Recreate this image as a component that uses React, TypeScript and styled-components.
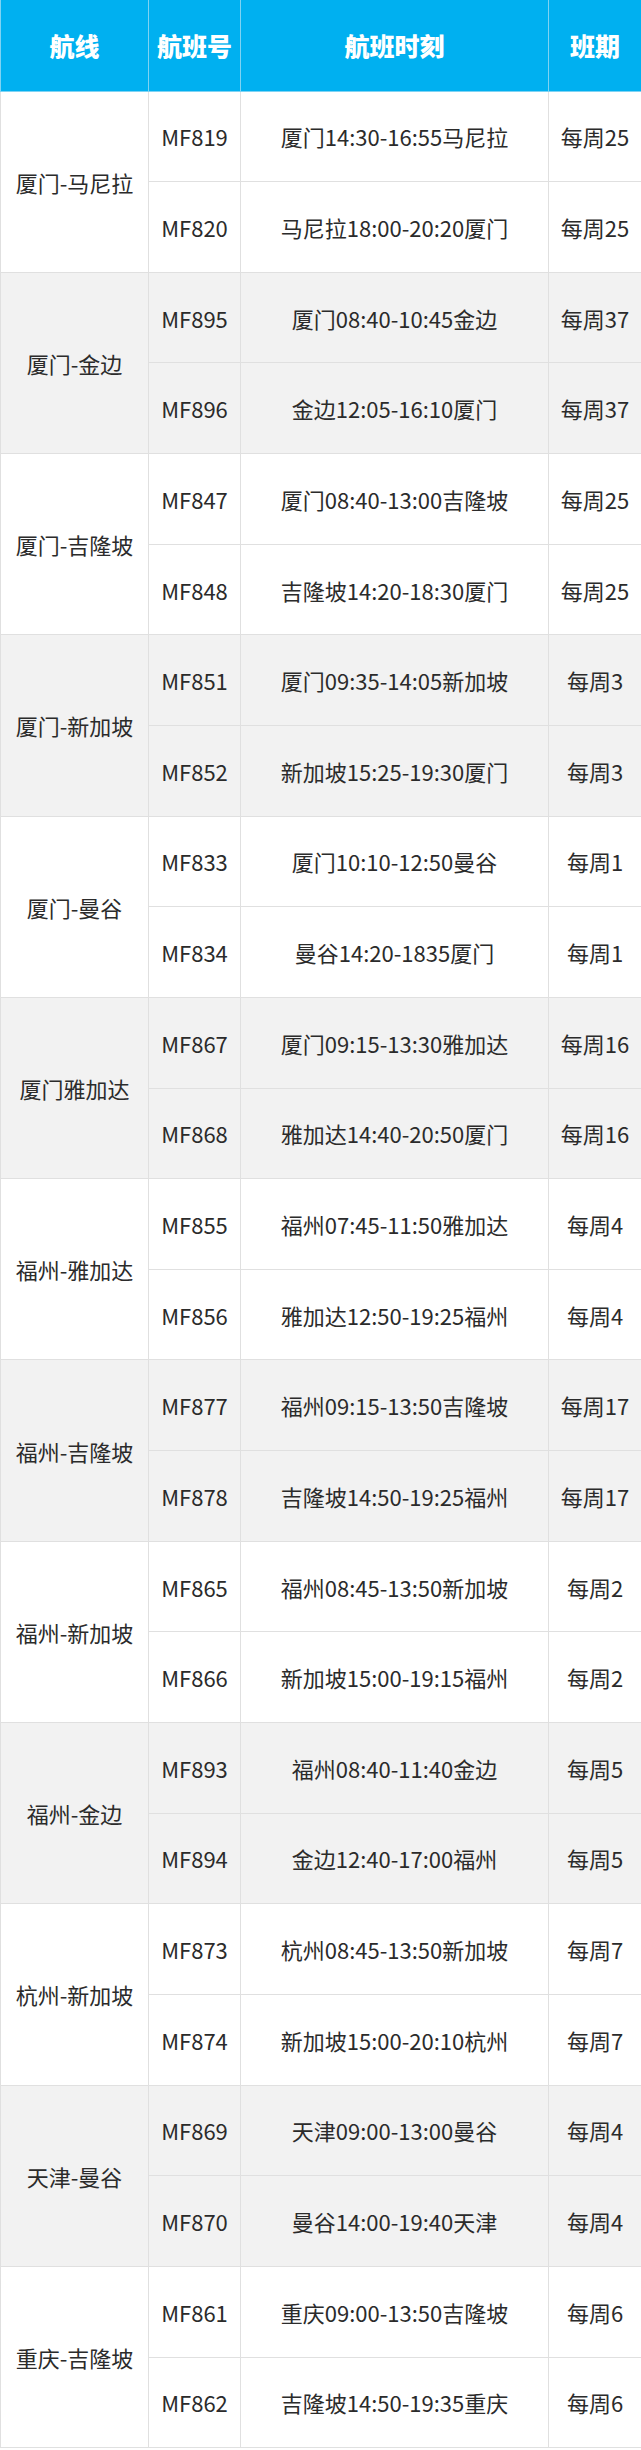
import React from 'react';
import styled, { createGlobalStyle } from 'styled-components';

const GlobalStyle = createGlobalStyle`
  html, body {
    margin: 0;
    padding: 0;
    background: #fff;
  }
  body {
    font-family: "Noto Sans CJK SC", "Noto Sans", sans-serif;
  }
`;

interface IFlight {
  no: string;
  time: string;
  days: string;
}

interface IRoute {
  route: string;
  flights: IFlight[];
}

const routes: IRoute[] = [
  {
    route: '厦门-马尼拉',
    flights: [
      { no: 'MF819', time: '厦门14:30-16:55马尼拉', days: '每周25' },
      { no: 'MF820', time: '马尼拉18:00-20:20厦门', days: '每周25' },
    ],
  },
  {
    route: '厦门-金边',
    flights: [
      { no: 'MF895', time: '厦门08:40-10:45金边', days: '每周37' },
      { no: 'MF896', time: '金边12:05-16:10厦门', days: '每周37' },
    ],
  },
  {
    route: '厦门-吉隆坡',
    flights: [
      { no: 'MF847', time: '厦门08:40-13:00吉隆坡', days: '每周25' },
      { no: 'MF848', time: '吉隆坡14:20-18:30厦门', days: '每周25' },
    ],
  },
  {
    route: '厦门-新加坡',
    flights: [
      { no: 'MF851', time: '厦门09:35-14:05新加坡', days: '每周3' },
      { no: 'MF852', time: '新加坡15:25-19:30厦门', days: '每周3' },
    ],
  },
  {
    route: '厦门-曼谷',
    flights: [
      { no: 'MF833', time: '厦门10:10-12:50曼谷', days: '每周1' },
      { no: 'MF834', time: '曼谷14:20-1835厦门', days: '每周1' },
    ],
  },
  {
    route: '厦门雅加达',
    flights: [
      { no: 'MF867', time: '厦门09:15-13:30雅加达', days: '每周16' },
      { no: 'MF868', time: '雅加达14:40-20:50厦门', days: '每周16' },
    ],
  },
  {
    route: '福州-雅加达',
    flights: [
      { no: 'MF855', time: '福州07:45-11:50雅加达', days: '每周4' },
      { no: 'MF856', time: '雅加达12:50-19:25福州', days: '每周4' },
    ],
  },
  {
    route: '福州-吉隆坡',
    flights: [
      { no: 'MF877', time: '福州09:15-13:50吉隆坡', days: '每周17' },
      { no: 'MF878', time: '吉隆坡14:50-19:25福州', days: '每周17' },
    ],
  },
  {
    route: '福州-新加坡',
    flights: [
      { no: 'MF865', time: '福州08:45-13:50新加坡', days: '每周2' },
      { no: 'MF866', time: '新加坡15:00-19:15福州', days: '每周2' },
    ],
  },
  {
    route: '福州-金边',
    flights: [
      { no: 'MF893', time: '福州08:40-11:40金边', days: '每周5' },
      { no: 'MF894', time: '金边12:40-17:00福州', days: '每周5' },
    ],
  },
  {
    route: '杭州-新加坡',
    flights: [
      { no: 'MF873', time: '杭州08:45-13:50新加坡', days: '每周7' },
      { no: 'MF874', time: '新加坡15:00-20:10杭州', days: '每周7' },
    ],
  },
  {
    route: '天津-曼谷',
    flights: [
      { no: 'MF869', time: '天津09:00-13:00曼谷', days: '每周4' },
      { no: 'MF870', time: '曼谷14:00-19:40天津', days: '每周4' },
    ],
  },
  {
    route: '重庆-吉隆坡',
    flights: [
      { no: 'MF861', time: '重庆09:00-13:50吉隆坡', days: '每周6' },
      { no: 'MF862', time: '吉隆坡14:50-19:35重庆', days: '每周6' },
    ],
  },
];

const SCPage = styled.div`
  width: 641px;
  padding-bottom: 2px;
`;

const SCTable = styled.table`
  width: 641px;
  border-collapse: collapse;
  table-layout: fixed;
`;

const SCHeadRow = styled.tr`
  height: 91px;
  background: #00b0f0;
`;

const SCHeadCell = styled.th`
  padding: 0;
  border: 1px solid #7fd3f3;
  border-top: none;
  color: #fff;
  font-size: 25px;
  font-weight: 900;
  text-align: center;
  vertical-align: middle;
`;

const SCRow = styled.tr<{ $shaded: boolean }>`
  height: 90.65px;
  background: ${(p) => (p.$shaded ? '#f2f2f2' : '#ffffff')};
`;

const SCCell = styled.td`
  padding: 0;
  border: 1px solid #e0e0e0;
  color: #2b2b2b;
  font-size: 22px;
  text-align: center;
  vertical-align: middle;
  white-space: nowrap;
`;

const SCRouteCell = styled(SCCell)`
  font-size: 22px;
`;

const App = () => {
  return (
    <SCPage>
      <GlobalStyle />
      <SCTable>
        <colgroup>
          <col style={{ width: 148 }} />
          <col style={{ width: 92 }} />
          <col style={{ width: 308 }} />
          <col style={{ width: 93 }} />
        </colgroup>
        <thead>
          <SCHeadRow>
            <SCHeadCell>航线</SCHeadCell>
            <SCHeadCell>航班号</SCHeadCell>
            <SCHeadCell>航班时刻</SCHeadCell>
            <SCHeadCell>班期</SCHeadCell>
          </SCHeadRow>
        </thead>
        <tbody>
          {routes.map((r, i) =>
            r.flights.map((f, j) => (
              <SCRow key={f.no} $shaded={i % 2 === 1}>
                {j === 0 && <SCRouteCell rowSpan={r.flights.length}>{r.route}</SCRouteCell>}
                <SCCell>{f.no}</SCCell>
                <SCCell>{f.time}</SCCell>
                <SCCell>{f.days}</SCCell>
              </SCRow>
            )),
          )}
        </tbody>
      </SCTable>
    </SCPage>
  );
};

export default App;
